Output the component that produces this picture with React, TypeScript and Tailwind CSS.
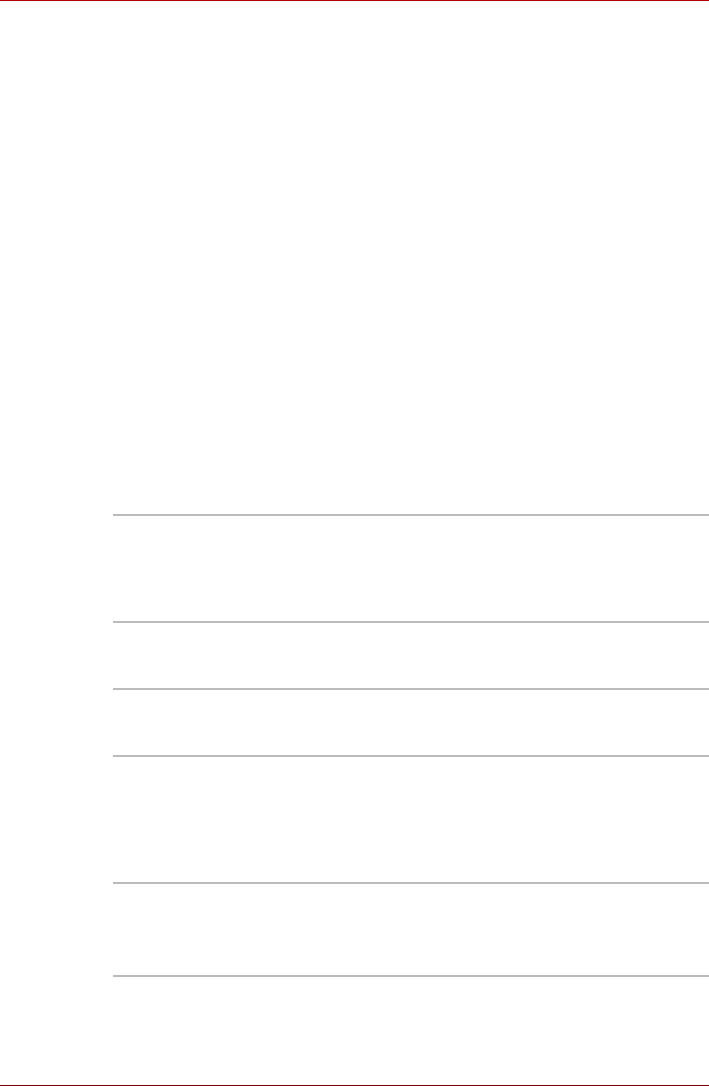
import { FC } from "react"

// empty table rows: height of the blank space under each rule
const rows = [105, 65, 65, 125, 91]

const App: FC = () => {
  return (
    <div className="w-[709px] h-[1086px] bg-white flex flex-col font-['Liberation_Sans',sans-serif]">
      <div className="h-px bg-[#b00000]" />

      <div className="h-[513px]" />

      <div className="pl-[113px] flex flex-col">
        {rows.map((h, i) => (
          <div key={i} className="border-t-2 border-[#bbbbbb]" style={{ height: h + 2 }} />
        ))}
        <div className="border-t-2 border-[#bbbbbb]" />
      </div>

      <div className="flex-1" />

      <div className="h-px bg-[#800000]" />
    </div>
  )
}

export default App
